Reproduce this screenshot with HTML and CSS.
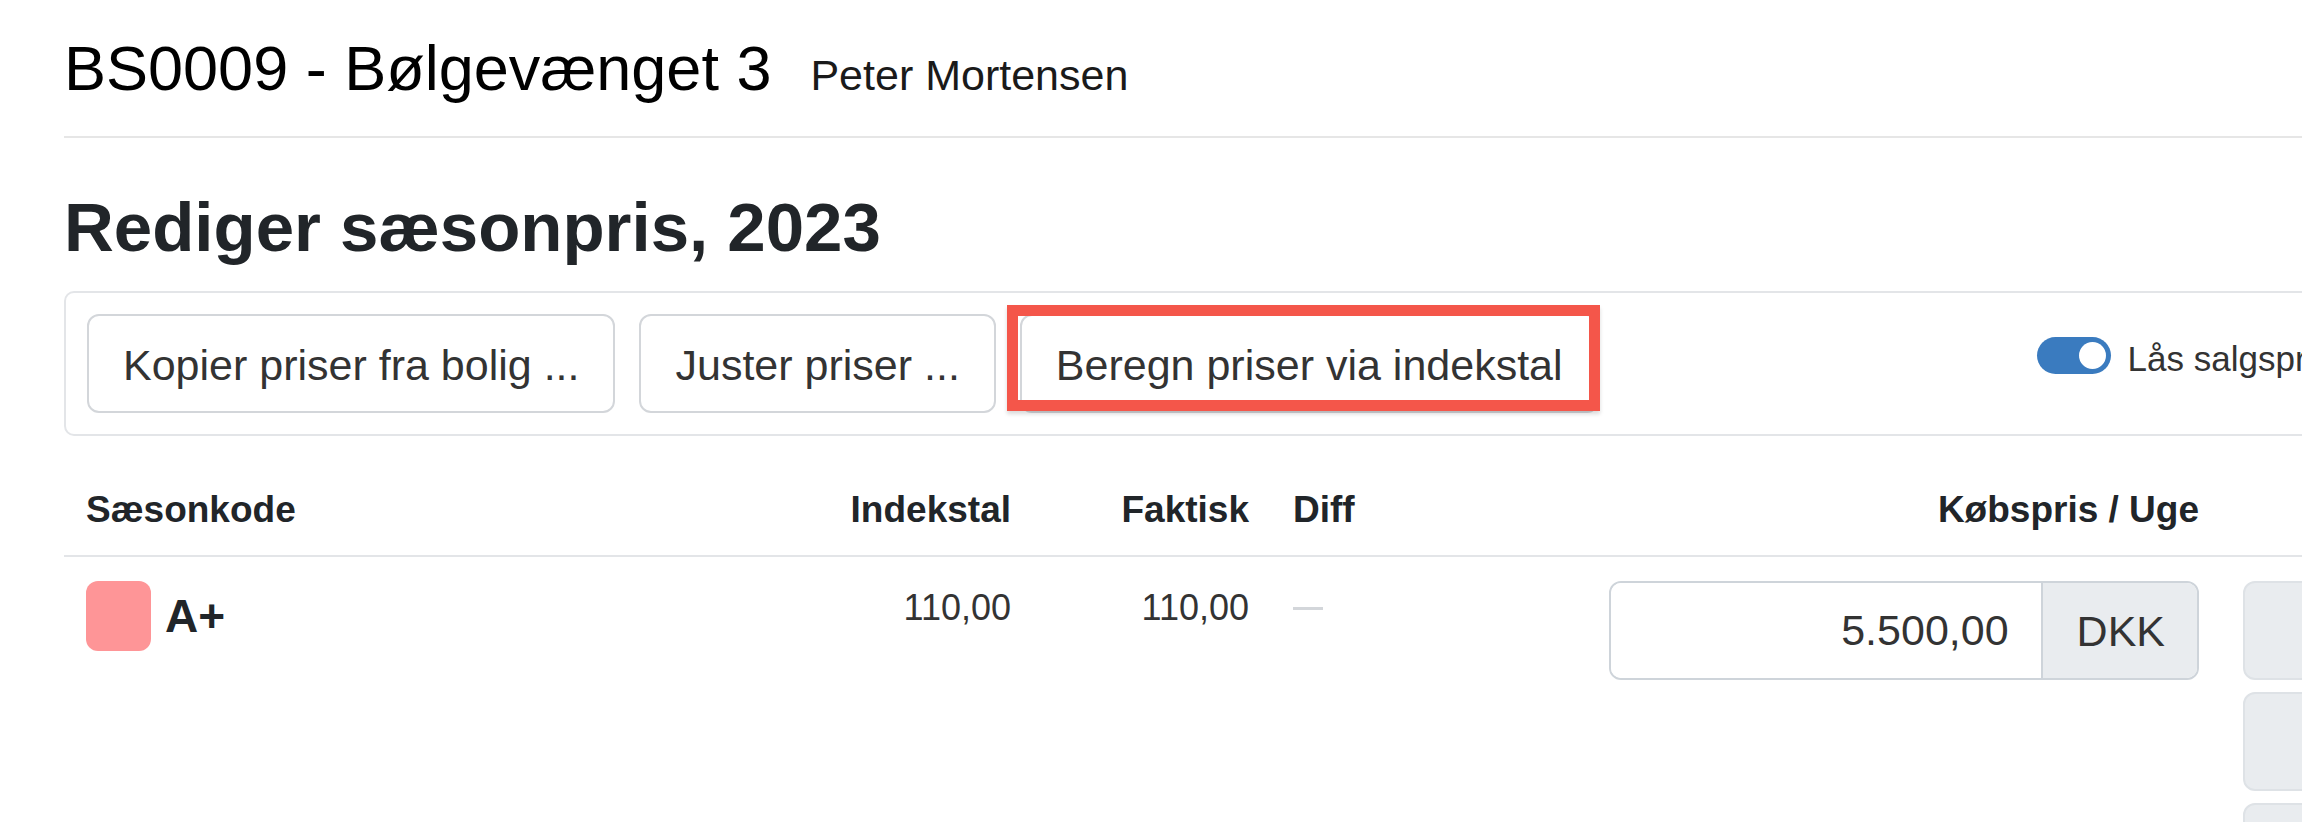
FILE: index.html
```html
<!DOCTYPE html>
<html lang="da">
<head>
  <meta charset="UTF-8">
  <title>Rediger sæsonpris, 2023</title>
  <meta name="viewport" content="width=device-width, initial-scale=1.0">
  <link rel="stylesheet" href="styles.css">
</head>
<body>
  <div class="page">
    <header class="page-head">
      <h1 class="property-title">BS0009 - Bølgevænget 3</h1>
      <span class="owner">Peter Mortensen</span>
    </header>

    <h2 class="page-title">Rediger sæsonpris, 2023</h2>

    <div class="toolbar">
      <button class="btn">Kopier priser fra bolig ...</button>
      <button class="btn">Juster priser ...</button>
      <span class="highlight">
        <button class="btn btn-focus">Beregn priser via indekstal</button>
      </span>
      <label class="switch">
        <span class="switch-track"><span class="switch-knob"></span></span>
        <span class="switch-label">Lås salgspriser</span>
      </label>
    </div>

    <div class="price-table">
      <div class="th">Sæsonkode</div>
      <div class="th num">Indekstal</div>
      <div class="th num">Faktisk</div>
      <div class="th">Diff</div>
      <div class="th num">Købspris / Uge</div>
      <div class="th"></div>

      <div class="td code-cell">
        <span class="swatch"></span>
        <strong class="code">A+</strong>
      </div>
      <div class="td num">110,00</div>
      <div class="td num">110,00</div>
      <div class="td"><span class="diff-empty"></span></div>
      <div class="td">
        <div class="input-group">
          <input class="price-input" type="text" value="5.500,00">
          <span class="addon">DKK</span>
        </div>
      </div>
      <div class="td actions">
        <button class="btn-light"></button>
        <button class="btn-light"></button>
        <button class="btn-light"></button>
      </div>
    </div>
  </div>
</body>
</html>
```

FILE: styles.css
```css
html, body {
  overflow: hidden;
}
body {
  margin: 0;
  font-family: "Liberation Sans", Arial, sans-serif;
  color: #212529;
  background: #ffffff;
}
.page {
  width: 2322px;
  margin-left: 64px;
}
.page-head {
  display: flex;
  align-items: baseline;
  padding-top: 31px;
  padding-bottom: 29px;
  border-bottom: 2px solid #e6e6e6;
}
.property-title {
  margin: 0;
  font-size: 63px;
  font-weight: normal;
  line-height: 1.2;
  color: #000;
}
.owner {
  margin-left: 39px;
  font-size: 43px;
  line-height: 1.2;
  color: #1a1a1a;
}
.page-title {
  margin: 49px 0 22px;
  font-size: 69px;
  font-weight: bold;
  line-height: 1.2;
  color: #212529;
}
.toolbar {
  display: flex;
  align-items: flex-start;
  gap: 24px;
  padding: 21px;
  border: 2px solid #e3e5e8;
  border-radius: 10px;
}
.btn {
  font-family: inherit;
  font-size: 43px;
  line-height: 1.5;
  color: #333;
  background: #fff;
  border: 2px solid #d3d6da;
  border-radius: 12px;
  padding: 17px 34px 13px;
  cursor: pointer;
}
.highlight {
  position: relative;
  display: inline-flex;
}
.highlight::after {
  content: "";
  position: absolute;
  left: -13px;
  top: -9px;
  right: -1px;
  bottom: 2px;
  border: 11px solid #f4564a;
  box-shadow: 0 3px 4px rgba(0,0,0,0.15);
  pointer-events: none;
}
.switch {
  display: flex;
  align-items: flex-start;
  gap: 17px;
  margin-left: auto;
  margin-top: 22px;
}
.switch-track {
  display: flex;
  justify-content: flex-end;
  align-items: center;
  width: 74px;
  height: 37px;
  margin-top: 1px;
  padding: 0 5px;
  box-sizing: border-box;
  background: #3a7bbf;
  border-radius: 19px;
}
.switch-knob {
  width: 27px;
  height: 27px;
  border-radius: 50%;
  background: #fff;
}
.switch-label {
  font-size: 35px;
  line-height: 45px;
  color: #333;
}
.price-table {
  display: grid;
  grid-template-columns: 736px 233px 238px 316px 634px 165px;
  margin-top: 24px;
}
.th {
  padding: 22px 22px 18px;
  font-size: 37px;
  font-weight: bold;
  line-height: 1.5;
  border-bottom: 2px solid #e3e5e8;
}
.td {
  padding: 24px 22px;
  font-size: 36px;
  line-height: 1.5;
  color: #333;
}
.num {
  text-align: right;
}
.code-cell {
  display: flex;
  align-items: center;
  align-self: start;
  gap: 14px;
}
.swatch {
  width: 65px;
  height: 70px;
  border-radius: 12px;
  background: #fe9597;
}
.code {
  font-size: 46px;
  line-height: 1.2;
  color: #212529;
}
.diff-empty {
  display: block;
  width: 30px;
  height: 3px;
  margin-top: 26px;
  background: #d3d6da;
}
.input-group {
  display: flex;
  height: 99px;
  box-sizing: border-box;
  border: 2px solid #ced4da;
  border-radius: 12px;
  overflow: hidden;
}
.price-input {
  flex: 1;
  min-width: 0;
  border: none;
  padding: 0 32px 0 0;
  font-family: inherit;
  font-size: 43px;
  color: #333;
  text-align: right;
  background: #fff;
}
.addon {
  display: flex;
  align-items: center;
  padding: 0 32px 0 34px;
  font-size: 43px;
  color: #333;
  background: #e9ecef;
  border-left: 2px solid #ced4da;
}
.actions {
  display: flex;
  flex-direction: column;
  gap: 12px;
}
.btn-light {
  height: 99px;
  background: #e9ecef;
  border: 2px solid #dee2e6;
  border-radius: 12px;
}
```
